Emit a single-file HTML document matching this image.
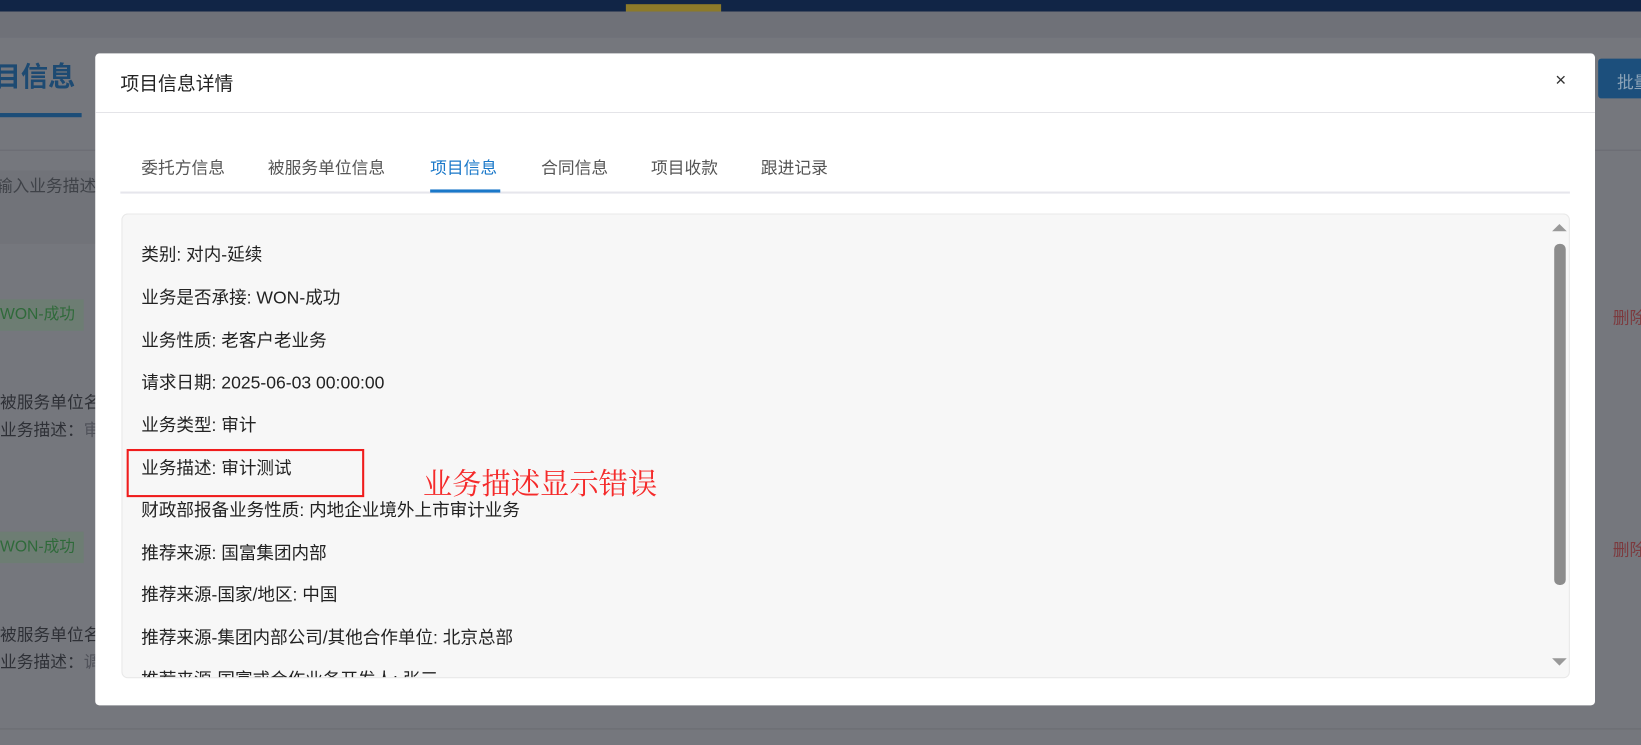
<!DOCTYPE html>
<html><head><meta charset="utf-8"><style>
*{margin:0;padding:0;box-sizing:border-box}
body{width:1641px;height:745px;overflow:hidden;background:#75777d;font-family:"Liberation Sans","Noto Sans CJK SC",sans-serif;position:relative}
#w{position:absolute;left:0;top:0;width:1568px;height:712px;transform:scale(1.0466);transform-origin:0 0}
.a{position:absolute;white-space:nowrap}
.line{position:absolute;left:135px;font-size:16.8px;color:#222;white-space:nowrap}
.tab{position:absolute;top:147px;font-size:16px;color:#555}
</style></head><body><div id="w">
<div class="a" style="left:0;top:0;width:1568px;height:11px;background:#112546"></div>
<div class="a" style="left:598px;top:4px;width:91px;height:7px;background:#8c7a2a"></div>
<div class="a" style="left:0;top:11px;width:1568px;height:25px;background:#6f7178"></div>
<div class="a" style="left:-6px;top:53px;font-size:26px;font-weight:bold;color:#1d4a72">目信息</div>
<div class="a" style="left:0;top:108px;width:78px;height:4px;background:#1c4d78"></div>
<div class="a" style="left:0;top:143px;width:1568px;height:1px;background:#6a6c72"></div>
<div class="a" style="left:0;top:163px;width:100px;height:70px;background:#717379"></div>
<div class="a" style="left:-4px;top:164px;font-size:16px;color:#3f4248">输入业务描述</div>
<div class="a" style="left:0;top:286px;width:80px;height:30px;background:#6d7d73"></div>
<div class="a" style="left:0;top:289px;font-size:15px;color:#2f6a3a">WON-成功</div>
<div class="a" style="left:0;top:508px;width:80px;height:30px;background:#6d7d73"></div>
<div class="a" style="left:0;top:511px;font-size:15px;color:#2f6a3a">WON-成功</div>
<div class="a" style="left:0;top:371px;font-size:16px;color:#2e3036">被服务单位名</div>
<div class="a" style="left:0;top:397px;font-size:16px;color:#2e3036">业务描述：<span style="color:#50525a">审</span></div>
<div class="a" style="left:0;top:593px;font-size:16px;color:#2e3036">被服务单位名</div>
<div class="a" style="left:0;top:619px;font-size:16px;color:#2e3036">业务描述：<span style="color:#50525a">调</span></div>
<div class="a" style="left:1527px;top:56px;width:120px;height:38px;background:#1c4f7c;border-radius:3px;color:#8ea4b8;font-size:16px;padding:9px 0 0 18px">批量</div>
<div class="a" style="left:1541px;top:290px;font-size:16px;color:#7c3a3e">删除</div>
<div class="a" style="left:1541px;top:512px;font-size:16px;color:#7c3a3e">删除</div>
<div class="a" style="left:0;top:696px;width:1568px;height:1px;background:#6a6c72"></div>

<div class="a" style="left:91px;top:51px;width:1433px;height:623px;background:#fff;border-radius:4px"></div>
<div class="a" style="left:115px;top:66px;font-size:18px;color:#222">项目信息详情</div>
<div class="a" style="left:1486px;top:66px;font-size:18px;color:#333">×</div>
<div class="a" style="left:91px;top:107px;width:1433px;height:1px;background:#e4e4e8"></div>
<div class="tab" style="left:135px">委托方信息</div>
<div class="tab" style="left:256px">被服务单位信息</div>
<div class="tab" style="left:411px;color:#1a78c9">项目信息</div>
<div class="tab" style="left:517px">合同信息</div>
<div class="tab" style="left:622px">项目收款</div>
<div class="tab" style="left:727px">跟进记录</div>
<div class="a" style="left:115px;top:183px;width:1385px;height:2px;background:#e6e6ec"></div>
<div class="a" style="left:411px;top:181px;width:67px;height:3px;background:#1a78c9"></div>

<div class="a" style="left:116px;top:204px;width:1384px;height:444px;background:#f7f7f7;border:1px solid #e8e8e8;border-radius:6px;overflow:hidden"></div>
<div class="a" style="left:1485px;top:233px;width:11px;height:326px;background:#8c8c8c;border-radius:5px"></div>
<div class="a" style="left:1483px;top:214px;width:0;height:0;border-left:7px solid transparent;border-right:7px solid transparent;border-bottom:7px solid #999"></div>
<div class="a" style="left:1483px;top:629px;width:0;height:0;border-left:7px solid transparent;border-right:7px solid transparent;border-top:7px solid #999"></div>
<div class="a" style="left:116px;top:205px;width:1366px;height:442px;overflow:hidden">
<div class="line" style="left:19px;top:25px">类别: 对内-延续</div>
<div class="line" style="left:19px;top:66px">业务是否承接: WON-成功</div>
<div class="line" style="left:19px;top:107px">业务性质: 老客户老业务</div>
<div class="line" style="left:19px;top:147px">请求日期: 2025-06-03 00:00:00</div>
<div class="line" style="left:19px;top:188px">业务类型: 审计</div>
<div class="line" style="left:19px;top:229px">业务描述: 审计测试</div>
<div class="line" style="left:19px;top:269px">财政部报备业务性质: 内地企业境外上市审计业务</div>
<div class="line" style="left:19px;top:310px">推荐来源: 国富集团内部</div>
<div class="line" style="left:19px;top:350px">推荐来源-国家/地区: 中国</div>
<div class="line" style="left:19px;top:391px">推荐来源-集团内部公司/其他合作单位: 北京总部</div>
<div class="line" style="left:19px;top:431px">推荐来源-国富或合作业务开发人: 张三</div>
</div>
<div class="a" style="left:121px;top:429px;width:227px;height:46px;border:2px solid #f01c1c"></div>
<div class="a" style="left:404px;top:441px;font-size:28px;color:#f52a2a;font-family:'Noto Serif CJK SC','Liberation Serif',serif">业务描述显示错误</div>
</div></body></html>
